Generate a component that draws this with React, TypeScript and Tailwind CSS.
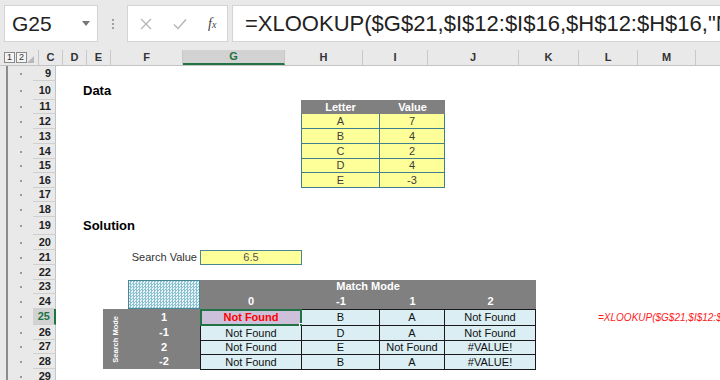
import React from "react";

const ROWS = [
  { n: 9, h: 15 },
  { n: 10, h: 19 },
  { n: 11, h: 14 },
  { n: 12, h: 15 },
  { n: 13, h: 15 },
  { n: 14, h: 15 },
  { n: 15, h: 14 },
  { n: 16, h: 15 },
  { n: 17, h: 14 },
  { n: 18, h: 15 },
  { n: 19, h: 18 },
  { n: 20, h: 15 },
  { n: 21, h: 15 },
  { n: 22, h: 15 },
  { n: 23, h: 14 },
  { n: 24, h: 15 },
  { n: 25, h: 16 },
  { n: 26, h: 15 },
  { n: 27, h: 14 },
  { n: 28, h: 15 },
  { n: 29, h: 15 },
];

const COLS: [string, number][] = [
  ["C", 24],
  ["D", 24],
  ["E", 24],
  ["F", 72],
  ["G", 102],
  ["H", 78],
  ["I", 65],
  ["J", 91],
  ["K", 60],
  ["L", 59],
  ["M", 58],
  ["N", 60],
];

const DATA = [
  ["A", "7"],
  ["B", "4"],
  ["C", "2"],
  ["D", "4"],
  ["E", "-3"],
];

const RESULTS = [
  ["Not Found", "B", "A", "Not Found"],
  ["Not Found", "D", "A", "Not Found"],
  ["Not Found", "E", "Not Found", "#VALUE!"],
  ["Not Found", "B", "A", "#VALUE!"],
];

export default function App() {
  return (
    <div className="w-[720px] h-[380px] overflow-hidden bg-white font-['Liberation_Sans',Arial,sans-serif] text-[#222]">
      {/* Formula bar */}
      <div className="h-[50px] bg-[#e9e9e9] flex items-start pt-[5px] pl-[4px]">
        <div className="w-[94px] h-[37px] bg-white border border-[#d4d4d4] flex items-center justify-between pl-[7px] pr-[7px]">
          <span className="text-[21px] leading-none text-[#222]">G25</span>
          <svg width="8" height="5" viewBox="0 0 8 5">
            <path d="M0 0h8L4 5z" fill="#777" />
          </svg>
        </div>
        <div className="w-[29px] h-[37px] flex flex-col items-center justify-center gap-[2px]">
          <span className="w-[2px] h-[2px] bg-[#a0a0a0]" />
          <span className="w-[2px] h-[2px] bg-[#a0a0a0]" />
          <span className="w-[2px] h-[2px] bg-[#a0a0a0]" />
        </div>
        <div className="w-[101px] h-[37px] bg-white border border-[#d4d4d4] flex items-center pl-[12px] gap-[21px]">
          <svg width="12" height="12" viewBox="0 0 12 12">
            <path d="M1 1l10 10M11 1L1 11" stroke="#b5b5b5" strokeWidth="1.3" />
          </svg>
          <svg width="14" height="12" viewBox="0 0 14 12">
            <path d="M1 6.5l4 4L13 1.5" stroke="#b5b5b5" strokeWidth="1.4" fill="none" />
          </svg>
          <span className="font-['Liberation_Serif',serif] italic text-[14px] text-[#444] leading-none">
            f<span className="text-[10px]">x</span>
          </span>
        </div>
        <div className="ml-[4px] flex-1 h-[37px] bg-white border border-r-0 border-[#d4d4d4] flex items-center pl-[12px] overflow-hidden whitespace-nowrap">
          <span className="text-[22px] leading-none text-[#222]">
            =XLOOKUP($G$21,$I$12:$I$16,$H$12:$H$16,"Not Found",G$24,$F25)
          </span>
        </div>
      </div>

      {/* Column headers */}
      <div className="h-[16px] flex bg-[#e9e9e9] border-b border-[#c4c4c4]">
        <div className="w-[33px] flex items-start pl-[4px] pt-[2px] gap-[1px]">
          <span className="w-[11px] h-[11px] border border-[#8a8a8a] bg-[#f4f4f4] text-[9px] leading-[9px] text-center text-[#333]">1</span>
          <span className="w-[11px] h-[11px] border border-[#8a8a8a] bg-[#f4f4f4] text-[9px] leading-[9px] text-center text-[#333]">2</span>
        </div>
        <div className="w-[23px] flex items-end justify-end pr-[4px] pb-[2px] border-r border-[#c4c4c4]">
          <svg width="7" height="7" viewBox="0 0 7 7">
            <path d="M7 0V7H0z" fill="#b8b8b8" />
          </svg>
        </div>
        {COLS.map(([c, w]) => (
          <div
            key={c}
            style={{ width: w }}
            className={`shrink-0 flex items-center justify-center text-[11px] font-bold border-r border-[#c8c8c8] ${
              c === "G"
                ? "bg-[#d2d2d2] text-[#217346] border-b-2 border-b-[#217346]"
                : "text-[#333]"
            }`}
          >
            {c}
          </div>
        ))}
      </div>

      {/* Body */}
      <div className="flex">
        {/* Outline gutter + row headers */}
        <div className="w-[56px] shrink-0 flex flex-col bg-[#e9e9e9]">
          {ROWS.map((r) => (
            <div key={r.n} style={{ height: r.h }} className="flex">
              <div className="w-[33px] flex">
                <div className="ml-[6px] border-l-2 border-[#8c8c8c] flex-1 flex items-center justify-center">
                  <span className="w-[2px] h-[2px] bg-[#9a9a9a]" />
                </div>
              </div>
              <div
                className={`w-[23px] flex items-center justify-end pr-[4px] text-[11px] font-bold border-b border-[#cfcfcf] ${
                  r.n === 25
                    ? "bg-[#d2d2d2] text-[#217346] border-r-2 border-r-[#217346]"
                    : "text-[#222] border-r border-r-[#c4c4c4]"
                }`}
              >
                {r.n}
              </div>
            </div>
          ))}
        </div>

        {/* Sheet */}
        <div className="flex-1 grid grid-cols-[24px_24px_24px_72px_102px_78px_65px_91px_60px_59px_58px_1fr] grid-rows-[15px_19px_14px_15px_15px_15px_14px_15px_14px_15px_18px_15px_15px_15px_14px_15px_16px_15px_14px_15px_15px]">
          {/* Data heading */}
          <div className="col-start-2 col-span-4 row-start-2 flex items-end pl-[3px] text-[13px] font-bold text-black">
            Data
          </div>

          {/* Data table */}
          <div className="col-start-6 col-span-2 row-start-3 row-span-6 -ml-px grid grid-cols-[79px_65px] grid-rows-[14px_15px_15px_15px_14px_15px] text-[11px]">
            <div className="bg-[#808080] text-white font-bold flex items-center justify-center">Letter</div>
            <div className="bg-[#808080] text-white font-bold flex items-center justify-center">Value</div>
            {DATA.map(([l, v]) => (
              <React.Fragment key={l}>
                <div className="bg-[#ffff99] border-l border-r border-b border-[#3f7f8f] text-[#3d3d3d] flex items-center justify-center">
                  {l}
                </div>
                <div className="bg-[#ffff99] border-r border-b border-[#3f7f8f] text-[#3d3d3d] flex items-center justify-center">
                  {v}
                </div>
              </React.Fragment>
            ))}
          </div>

          {/* Solution heading */}
          <div className="col-start-2 col-span-4 row-start-11 flex items-end pl-[3px] text-[13px] font-bold text-black">
            Solution
          </div>

          {/* Search value */}
          <div className="col-start-1 col-span-4 row-start-13 flex items-center justify-end pr-[3px] text-[11px] text-[#333]">
            Search Value
          </div>
          <div className="col-start-5 row-start-13 bg-[#ffff99] border border-[#4a8796] flex items-center justify-center text-[11px] text-[#555]">
            6.5
          </div>

          {/* Hatched corner */}
          <div className="col-start-4 row-start-15 row-span-2 border border-[#4a8796] bg-[repeating-conic-gradient(#8cc2cf_0_25%,#e8f4f7_0_50%)] bg-[length:3px_3px]" />

          {/* Match mode header */}
          <div className="col-start-5 col-span-4 row-start-15 row-span-2 bg-[#808080] grid grid-cols-[102px_78px_65px_91px] grid-rows-[14px_15px] text-[11px] font-bold text-white">
            <div className="col-span-4 flex items-end justify-center">Match Mode</div>
            <div className="flex items-end justify-center">0</div>
            <div className="flex items-end justify-center">-1</div>
            <div className="flex items-end justify-center">1</div>
            <div className="flex items-end justify-center">2</div>
          </div>

          {/* Search mode side block */}
          <div className="col-start-3 col-span-2 row-start-17 row-span-4 -ml-px bg-[#808080] grid grid-cols-[25px_72px] grid-rows-[16px_15px_14px_15px] text-white font-bold">
            <div className="row-span-4 flex items-center justify-center">
              <span className="[writing-mode:vertical-rl] rotate-180 text-[7.5px] leading-none whitespace-nowrap">
                Search Mode
              </span>
            </div>
            <div className="col-start-2 row-start-1 flex items-center justify-center text-[11px]">1</div>
            <div className="col-start-2 row-start-2 flex items-center justify-center text-[11px]">-1</div>
            <div className="col-start-2 row-start-3 flex items-center justify-center text-[11px]">2</div>
            <div className="col-start-2 row-start-4 flex items-center justify-center text-[11px]">-2</div>
          </div>

          {/* Results */}
          <div className="col-start-5 col-span-4 row-start-17 row-span-4 grid grid-cols-[102px_78px_65px_91px] grid-rows-[16px_15px_14px_15px] text-[11px] border-t border-[#1a1a1a]">
            {RESULTS.map((row, ri) =>
              row.map((val, ci) => {
                const selected = ri === 0 && ci === 0;
                return (
                  <div
                    key={`${ri}-${ci}`}
                    className={`relative flex items-center justify-center border-r border-b border-[#1a1a1a] ${
                      ci === 0 ? "border-l" : ""
                    } ${
                      selected
                        ? "bg-[#ccc0da] text-[#ff0000] font-bold"
                        : "bg-[#daeef3] text-[#111]"
                    }`}
                  >
                    {val}
                    {selected && (
                      <>
                        <span className="absolute -inset-[1px] border-2 border-[#217346]" />
                        <span className="absolute -right-[4px] -bottom-[4px] w-[6px] h-[6px] bg-[#217346] border border-white" />
                      </>
                    )}
                  </div>
                );
              })
            )}
          </div>

          {/* Formula note */}
          <div className="col-start-10 col-span-3 row-start-17 flex items-center pl-[2px] whitespace-nowrap overflow-visible text-[10px] italic text-[#ff1a1a]">
            =XLOOKUP($G$21,$I$12:$I$16,$H$12:$H$16,"Not Found",G$24,$F25)
          </div>
        </div>
      </div>
    </div>
  );
}
